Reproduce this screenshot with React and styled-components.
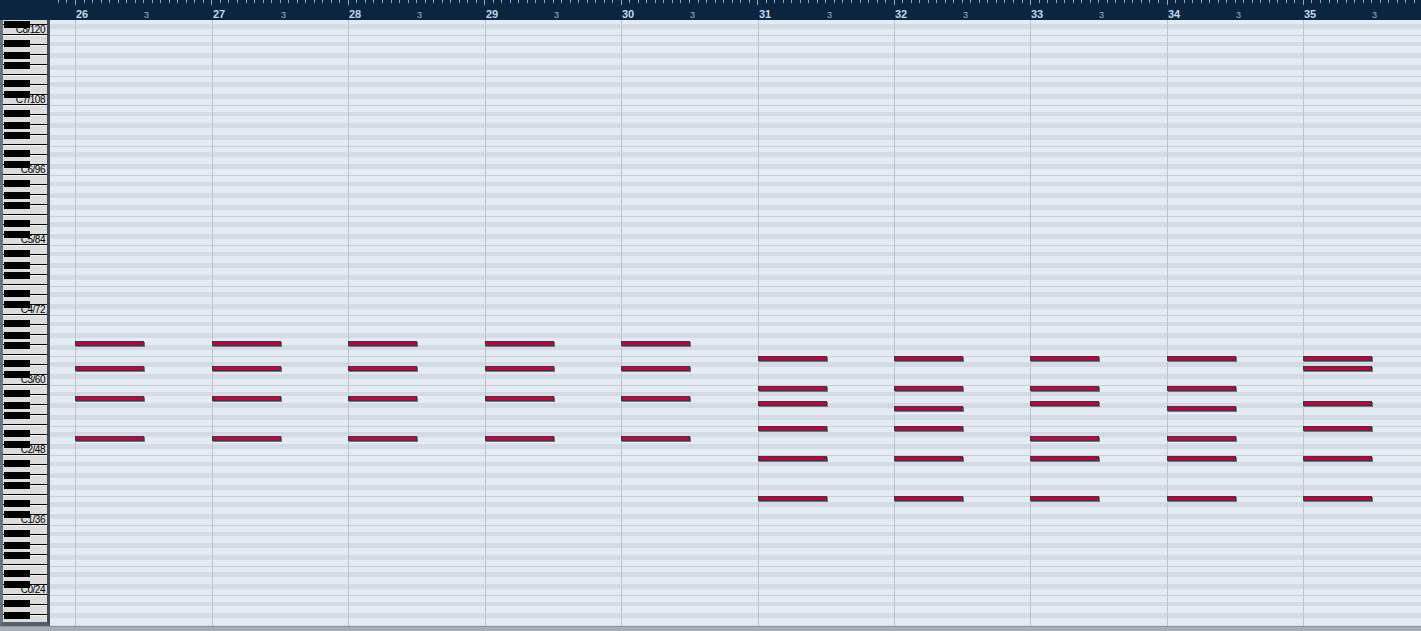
import React from 'react';
import styled, { createGlobalStyle } from 'styled-components';

const GlobalStyle = createGlobalStyle`
  html, body {
    margin: 0;
    padding: 0;
    background: #0b2541;
  }
  body {
    font-family: "Liberation Sans", Arial, sans-serif;
    overflow: hidden;
  }
`;

// page geometry
const BAR_NUMS = [26, 27, 28, 29, 30, 31, 32, 33, 34, 35];
const BAR_X = [75, 212, 348, 485, 621, 758, 894, 1030, 1167, 1303];
const BAR_W = 136.44;
const GRID_LEFT = 50;
const GRID_TOP = 20;
const SEMI = 70 / 12;
const BASE = 384.7; // top edge of the B2 row
const rowTop = (n) => Math.round(BASE - (n - 59) * SEMI);
const BLACK = [1, 3, 6, 8, 10];

// note tops per bar (page y)
const D_CHORD = [341, 366, 396, 436];
const NOTES = [
  D_CHORD,
  D_CHORD,
  D_CHORD,
  D_CHORD,
  D_CHORD,
  [356, 386, 401, 426, 456, 496],
  [356, 386, 406, 426, 456, 496],
  [356, 386, 401, 436, 456, 496],
  [356, 386, 406, 436, 456, 496],
  [356, 366, 401, 426, 456, 496],
];

const OCTAVES = [8, 7, 6, 5, 4, 3, 2, 1, 0, -1];
const WHITE_KEYS = ['B', 'A', 'G', 'F', 'E', 'D', 'C'];
const BLACK_KEY_TOPS = [5, 17, 27, 45, 56];

function App() {
  const rows = [];
  for (let n = 122; n >= 14; n--) {
    rows.push({ n, h: rowTop(n - 1) - rowTop(n) });
  }

  const ticks = [];
  for (let b = -1; b < 11; b++) {
    for (let t = 0; t < 16; t++) {
      const x = Math.round(75 + (b + t / 16) * BAR_W);
      if (x > 50 && x < 1421) ticks.push({ x, major: t === 0 });
    }
  }

  return (
    <Window>
      <GlobalStyle />
      <Ruler>
        {ticks.map((t) => (
          <Tick key={t.x} $major={t.major} style={{ left: t.x }} />
        ))}
        {BAR_X.map((x, i) => (
          <React.Fragment key={x}>
            <BarNumber style={{ left: x + 1 }}>{BAR_NUMS[i]}</BarNumber>
            <BeatNumber style={{ left: x + 69 }}>3</BeatNumber>
          </React.Fragment>
        ))}
      </Ruler>
      <Body>
        <Keyboard>
          <KeyColumn>
            {OCTAVES.map((o) => (
              <Octave key={o}>
                {WHITE_KEYS.map((k) => (
                  <WhiteKey key={k}>
                    {k === 'C' && o >= 0 && (
                      <KeyLabel>{`C${o}/${12 * o + 24}`}</KeyLabel>
                    )}
                  </WhiteKey>
                ))}
                {BLACK_KEY_TOPS.map((t) => (
                  <BlackKey key={t} style={{ top: t }} />
                ))}
              </Octave>
            ))}
          </KeyColumn>
        </Keyboard>
        <Grid>
          <RowColumn style={{ marginTop: rowTop(122) - GRID_TOP }}>
            {rows.map((r) => {
              const pc = ((r.n % 12) + 12) % 12;
              return (
                <Row
                  key={r.n}
                  $black={BLACK.includes(pc)}
                  $line={pc === 11 || pc === 4}
                  style={{ height: r.h }}
                />
              );
            })}
          </RowColumn>
          {BAR_X.map((x) => (
            <BarLine key={x} style={{ left: x - GRID_LEFT }} />
          ))}
          {NOTES.map((tops, i) =>
            tops.map((y) => (
              <Note
                key={`${i}-${y}`}
                style={{ left: BAR_X[i] - GRID_LEFT, top: y - GRID_TOP }}
              />
            ))
          )}
        </Grid>
      </Body>
      <BottomBar />
    </Window>
  );
}

export default App;

// style
const Window = styled.div`
  width: 1421px;
  height: 631px;
  display: flex;
  flex-direction: column;
  overflow: hidden;
  background: #0b2541;
`;

const Ruler = styled.div`
  position: relative;
  flex: none;
  height: 20px;
  background: #0b2541;
`;

const Tick = styled.div`
  position: absolute;
  top: 0;
  width: 1px;
  height: ${(p) => (p.$major ? '5px' : '3px')};
  background: #8fa7c0;
`;

const BarNumber = styled.span`
  position: absolute;
  top: 9px;
  font-size: 11px;
  line-height: 11px;
  font-weight: bold;
  color: #c2d7ec;
`;

const BeatNumber = styled.span`
  position: absolute;
  top: 11px;
  font-size: 9px;
  line-height: 9px;
  color: #9db6cf;
`;

const Body = styled.div`
  flex: none;
  height: 606px;
  display: flex;
`;

const Keyboard = styled.div`
  flex: none;
  width: 50px;
  height: 606px;
  box-sizing: border-box;
  border-left: 3px solid #6b7580;
  border-right: 3px solid #3f4b57;
  border-bottom: 4px solid #56616c;
  background: #dcdcdc;
  overflow: hidden;
`;

const KeyColumn = styled.div`
  display: flex;
  flex-direction: column;
  margin-top: -55px;
`;

const Octave = styled.div`
  position: relative;
  flex: none;
  height: 70px;
  display: flex;
  flex-direction: column;
`;

const WhiteKey = styled.div`
  flex: none;
  height: 10px;
  box-sizing: border-box;
  border-top: 1px solid #f4f4f4;
  border-bottom: 1px solid #000;
  background: #dcdcdc;
  display: flex;
  justify-content: flex-end;
  align-items: flex-end;
`;

const KeyLabel = styled.span`
  font-size: 10px;
  line-height: 8px;
  letter-spacing: -0.5px;
  padding-right: 2px;
  color: #000;
  white-space: nowrap;
`;

const BlackKey = styled.div`
  position: absolute;
  left: 1px;
  width: 26px;
  height: 7px;
  background: #000;
`;

const Grid = styled.div`
  position: relative;
  flex: 1;
  height: 606px;
  overflow: hidden;
  background: #e5ebf3;
`;

const RowColumn = styled.div`
  display: flex;
  flex-direction: column;
`;

const Row = styled.div`
  flex: none;
  box-sizing: border-box;
  background: ${(p) => (p.$black ? '#d3dbe5' : '#e5ebf3')};
  border-top: 1px solid
    ${(p) => (p.$line ? '#c6ced8' : '#e5ebf3')};
`;

const BarLine = styled.div`
  position: absolute;
  top: 0;
  bottom: 0;
  width: 1px;
  background: #bcc5cf;
`;

const Note = styled.div`
  position: absolute;
  width: 69px;
  height: 5px;
  box-sizing: border-box;
  background: #c8003a;
  border: 1px solid #333d47;
  box-shadow: 1px 1px 0 #6c7884;
`;

const BottomBar = styled.div`
  flex: none;
  height: 5px;
  border-top: 1px solid #8c96a0;
  background: #a7b0b9;
`;
